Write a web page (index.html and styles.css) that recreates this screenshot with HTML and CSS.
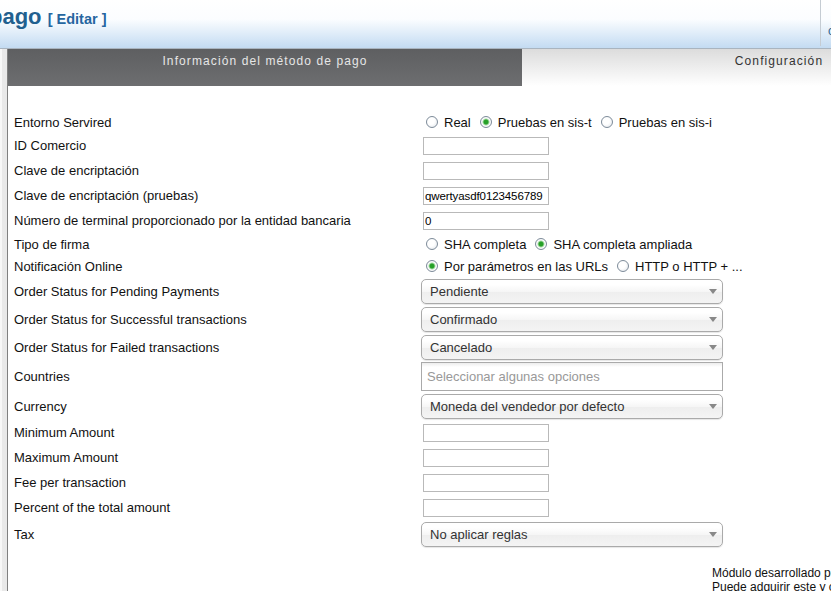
FILE: index.html
```html
<!DOCTYPE html>
<html lang="es">
  <head>
    <meta charset="UTF-8" />
    <meta name="viewport" content="width=device-width, initial-scale=1.0" />
    <title>Método de pago</title>
    <link rel="stylesheet" href="styles.css">
  </head>
  <body>
    <header class="top">
      <h1 class="title">pago <a class="edit" href="#">[ Editar ]</a></h1>
      <div class="top-side">cerrar</div>
    </header>

    <main class="page">
      <div class="side-strip"></div>
      <section class="panel">
        <nav class="tabs">
          <div class="tab tab-active">Información del método de pago</div>
          <div class="tab">Configuración</div>
        </nav>

        <form class="settings">
          <div class="row row-radio">
            <span class="field-label">Entorno Servired</span>
            <div class="field">
              <label class="option"><input class="radio" type="radio" name="env">Real</label>
              <label class="option"><input class="radio" type="radio" name="env" checked>Pruebas en sis-t</label>
              <label class="option"><input class="radio" type="radio" name="env">Pruebas en sis-i</label>
            </div>
          </div>
          <div class="row">
            <span class="field-label">ID Comercio</span>
            <input class="text-input" type="text">
          </div>
          <div class="row">
            <span class="field-label">Clave de encriptación</span>
            <input class="text-input" type="text">
          </div>
          <div class="row">
            <span class="field-label">Clave de encriptación (pruebas)</span>
            <input class="text-input" type="text" value="qwertyasdf0123456789">
          </div>
          <div class="row">
            <span class="field-label">Número de terminal proporcionado por la entidad bancaria</span>
            <input class="text-input" type="text" value="0">
          </div>
          <div class="row row-radio">
            <span class="field-label">Tipo de firma</span>
            <div class="field">
              <label class="option"><input class="radio" type="radio" name="sign">SHA completa</label>
              <label class="option"><input class="radio" type="radio" name="sign" checked>SHA completa ampliada</label>
            </div>
          </div>
          <div class="row row-radio">
            <span class="field-label">Notificación Online</span>
            <div class="field">
              <label class="option"><input class="radio" type="radio" name="notify" checked>Por parámetros en las URLs</label>
              <label class="option"><input class="radio" type="radio" name="notify">HTTP o HTTP + ...</label>
            </div>
          </div>
          <div class="row row-select">
            <span class="field-label">Order Status for Pending Payments</span>
            <div class="select">Pendiente<span class="caret"></span></div>
          </div>
          <div class="row row-select">
            <span class="field-label">Order Status for Successful transactions</span>
            <div class="select">Confirmado<span class="caret"></span></div>
          </div>
          <div class="row row-select">
            <span class="field-label">Order Status for Failed transactions</span>
            <div class="select">Cancelado<span class="caret"></span></div>
          </div>
          <div class="row row-multi">
            <span class="field-label">Countries</span>
            <div class="multi">Seleccionar algunas opciones</div>
          </div>
          <div class="row row-select">
            <span class="field-label">Currency</span>
            <div class="select">Moneda del vendedor por defecto<span class="caret"></span></div>
          </div>
          <div class="row">
            <span class="field-label">Minimum Amount</span>
            <input class="text-input" type="text">
          </div>
          <div class="row">
            <span class="field-label">Maximum Amount</span>
            <input class="text-input" type="text">
          </div>
          <div class="row">
            <span class="field-label">Fee per transaction</span>
            <input class="text-input" type="text">
          </div>
          <div class="row">
            <span class="field-label">Percent of the total amount</span>
            <input class="text-input" type="text">
          </div>
          <div class="row row-select">
            <span class="field-label">Tax</span>
            <div class="select">No aplicar reglas<span class="caret"></span></div>
          </div>
        </form>

        <div class="credits">
          Módulo desarrollado por nuestro equipo<br>
          Puede adquirir este y otros módulos
        </div>
      </section>
    </main>
  </body>
</html>
```

FILE: styles.css
```css
body {
  margin: 0;
  overflow: hidden;
  font-family: "Liberation Sans", Arial, sans-serif;
  background-color: #fff;
}
.top {
  display: flex;
  height: 48px;
  border-bottom: 1px solid #a9b4bf;
  background: linear-gradient(#fff 0%, #fbfdff 40%, #c3dbf2 100%);
}
.title {
  margin: 0 0 0 -11px;
  padding-top: 4px;
  font-size: 22px;
  line-height: 26px;
  font-weight: bold;
  color: #21608f;
  white-space: nowrap;
}
.edit {
  font-size: 14.5px;
  color: #2566a0;
  text-decoration: none;
}
.top-side {
  margin-left: auto;
  box-sizing: border-box;
  width: 11px;
  height: 46px;
  padding: 24px 0 0 7px;
  border-left: 1px solid #c5ccd3;
  font-size: 12px;
  line-height: 14px;
  color: #2b5f8c;
  white-space: nowrap;
}
.page {
  display: flex;
  width: 1036px;
  min-height: calc(100vh - 49px);
}
.side-strip {
  flex-shrink: 0;
  width: 5px;
  border-left: 2px solid #f8f8f8;
  background-color: #e9e9e9;
}
.panel {
  flex-shrink: 0;
  width: 1028px;
  border-left: 1px solid #808080;
}
.tabs {
  display: flex;
  height: 37px;
}
.tab {
  flex: 1;
  padding-top: 5px;
  text-align: center;
  font-size: 12px;
  line-height: 14px;
  letter-spacing: 1.1px;
  color: #333;
  background: linear-gradient(#dcdcdc, #fff);
}
.tab-active {
  color: #e6e6e6;
  background: linear-gradient(#5e5f61, #6d6e70);
}
.settings {
  padding: 25px 0 0 6px;
}
.row {
  display: flex;
  align-items: center;
  height: 25px;
  font-size: 13px;
  color: #111;
}
.row-radio {
  height: 22px;
}
.row-select {
  height: 28px;
}
.row-multi {
  height: 31px;
}
.field-label {
  flex-shrink: 0;
  width: 407px;
}
.field {
  display: flex;
  align-items: center;
}
.option {
  display: inline-flex;
  align-items: center;
  margin-right: 4px;
}
.radio {
  appearance: none;
  width: 12px;
  height: 12px;
  margin: 0 6px 0 5px;
  border: 1px solid #7d8b99;
  border-radius: 50%;
  background: radial-gradient(circle at 40% 40%, #fff 40%, #dde2e8 100%);
}
.radio:checked {
  background: radial-gradient(circle, #27a027 0 2px, #a3d9a3 3px, #fff 4px, #e2e6ea 100%);
}
.text-input {
  box-sizing: border-box;
  width: 126px;
  height: 18px;
  margin: 0 0 0 2px;
  padding: 0 1px;
  border: 1px solid #b9b9b9;
  font-family: "Liberation Sans", Arial, sans-serif;
  font-size: 11.5px;
  letter-spacing: -0.1px;
  color: #000;
}
.select {
  display: flex;
  align-items: center;
  box-sizing: border-box;
  width: 302px;
  height: 25px;
  padding: 0 5px 0 8px;
  border: 1px solid #aaa;
  border-radius: 5px;
  background: linear-gradient(#fff 20%, #f6f6f6 50%, #eee 52%, #f4f4f4 100%);
  box-shadow: 0 1px 1px rgba(0, 0, 0, 0.1);
  color: #333;
}
.caret {
  margin-left: auto;
  border-top: 5px solid #888;
  border-left: 4px solid transparent;
  border-right: 4px solid transparent;
}
.multi {
  display: flex;
  align-items: center;
  box-sizing: border-box;
  width: 302px;
  height: 29px;
  padding-left: 5px;
  border: 1px solid #aaa;
  background: linear-gradient(#eee 1%, #fff 15%);
  color: #999;
}
.credits {
  margin: 18px 0 0 704px;
  font-size: 12px;
  line-height: 14px;
  color: #111;
  white-space: nowrap;
}
```
